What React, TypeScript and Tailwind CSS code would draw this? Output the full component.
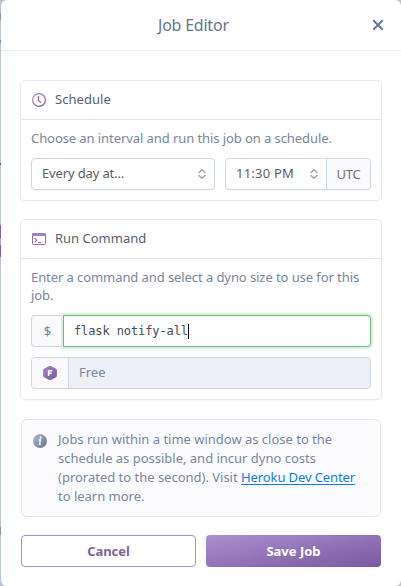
import React from 'react';

function Chevrons() {
  return (
    <svg width="8" height="10" viewBox="0 0 8 10" fill="none" stroke="#96a3b6" strokeWidth="1.4" strokeLinecap="round" strokeLinejoin="round">
      <path d="M1 3.6 4 .8l3 2.8M1 6.4l3 2.8 3-2.8" />
    </svg>
  );
}

function ClockIcon() {
  return (
    <svg width="14" height="14" viewBox="0 0 14 14" fill="none">
      <defs>
        <linearGradient id="clock" x1="0" y1="0" x2="1" y2="1">
          <stop stopColor="#ab8dcd" />
          <stop offset="1" stopColor="#79589f" />
        </linearGradient>
      </defs>
      <circle cx="7" cy="7" r="6.4" stroke="url(#clock)" strokeWidth="1.2" />
      <path d="M6.5 3v4.3L8.9 9.8" stroke="#9473b8" strokeWidth="1.3" />
    </svg>
  );
}

function TerminalIcon() {
  return (
    <svg width="14" height="12" viewBox="0 0 14 12" fill="none">
      <rect x=".5" y=".5" width="13" height="11" rx="1" stroke="#8f6fb4" />
      <path d="M0 1.2Q0 0 1.2 0h11.6Q14 0 14 1.2V3H0Z" fill="#a07fc3" />
      <path d="M2.6 5.2 4.8 7.2 2.6 9.2M6 9.5h3" stroke="#8462aa" strokeWidth="1.1" />
    </svg>
  );
}

function DynoIcon() {
  return (
    <svg width="14" height="16" viewBox="0 0 14 16">
      <defs>
        <linearGradient id="dyno" x1="0" y1="0" x2="1" y2="1">
          <stop stopColor="#a585c9" />
          <stop offset="1" stopColor="#79589f" />
        </linearGradient>
      </defs>
      <path d="M6.2.9q.8-.5 1.6 0l5.2 2.9q.9.5.9 1.4v5.6q0 .9-.9 1.4l-5.2 2.9q-.8.5-1.6 0L1 12.2q-.9-.5-.9-1.4V5.2q0-.9.9-1.4Z" fill="url(#dyno)" />
      <path d="M5.6 11V5.7h3.7M5.6 8.3h3.1" fill="none" stroke="#fff" strokeWidth="1.5" />
    </svg>
  );
}

function InfoIcon() {
  return (
    <svg width="14" height="14" viewBox="0 0 14 14">
      <defs>
        <linearGradient id="info" x1="0" y1="0" x2="1" y2="1">
          <stop stopColor="#b3bfd0" />
          <stop offset="1" stopColor="#62728f" />
        </linearGradient>
      </defs>
      <circle cx="7" cy="7" r="7" fill="url(#info)" />
      <circle cx="7.6" cy="3.6" r="1.1" fill="#fff" />
      <path d="M5.4 6h2l-1 4.4h1.5" fill="none" stroke="#fff" strokeWidth="1.3" />
    </svg>
  );
}

function CardHeader({ icon, children }: { icon: React.ReactNode; children: React.ReactNode }) {
  return (
    <div className="flex h-[39px] items-center gap-[9px] border-b border-[#e1e4ee] pb-px pl-[11px] text-[#5a6070]">
      {icon}
      {children}
    </div>
  );
}

export default function App() {
  return (
    <div className="flex h-[586px] w-[401px] overflow-hidden bg-[#bcc3d0] font-['Noto_Sans',sans-serif] text-[13px] leading-[18px] text-[#7886a0]">
      <div className="flex w-px shrink-0 flex-col">
        <div className="mt-[13px] h-[7px] bg-[#8c95a7]" />
        <div className="mt-5 h-[3px] bg-[#7890c4]" />
        <div className="mt-[120px] h-0.5 bg-[#56617a]" />
        <div className="mt-[60px] h-[13px] bg-[#80649f]" />
        <div className="h-[7px] bg-[#b9a8bd]" />
        <div className="h-3 bg-[#80649f]" />
        <div className="mt-[270px] h-2 bg-[#8c95a0]" />
      </div>
      <div className="flex w-[400px] flex-col rounded-md bg-white">
        <header className="flex h-[51px] shrink-0 items-center border-b border-[#ebecf5] pl-[157px]">
          <h1 className="w-[71px] text-base font-normal tracking-[-0.22px] whitespace-nowrap text-[#667489]">Job Editor</h1>
          <svg className="ml-[143px]" width="12" height="12" viewBox="0 0 12 12" stroke="#64789a" strokeWidth="2">
            <path d="m1.2 1.2 9.6 9.6m0-9.6-9.6 9.6" />
          </svg>
        </header>

        <section className="mt-[29px] ml-[19px] h-[121px] w-[362px] shrink-0 rounded-[5px] border border-[#e6e8ef] shadow-[0_1px_2px_#00000008]">
          <CardHeader icon={<ClockIcon />}>
            <span className="pb-0.5 tracking-[0.05px]">Schedule</span>
          </CardHeader>
          <div className="px-[10px] pt-[9px]">
            <p className="tracking-[-0.08px] whitespace-nowrap">Choose an interval and run this job on a schedule.</p>
            <div className="mt-[11px] flex text-[#5a5d62]">
              <div className="flex h-8 w-[184px] items-center justify-between rounded border border-[#cfd7e6] pr-2 pl-[10px] shadow-[0_1px_2px_#0000000a]">
                <span className="pb-0.5 tracking-[-0.14px]">Every day at...</span>
                <Chevrons />
              </div>
              <div className="ml-[10px] flex h-8 w-[146px] rounded border border-[#cfd7e6] shadow-[0_1px_2px_#0000000a]">
                <div className="flex w-[101px] items-center justify-between border-r border-[#cfd7e6] pr-2 pl-[10px]">
                  <span className="pb-0.5 tracking-[0.22px]">11:30 PM</span>
                  <Chevrons />
                </div>
                <div className="flex flex-1 items-center justify-center rounded-r bg-[#fafafd] tracking-[-0.3px] text-[#6c7078]">UTC</div>
              </div>
            </div>
          </div>
        </section>

        <section className="mt-[18px] ml-[19px] h-[181px] w-[362px] shrink-0 rounded-[5px] border border-[#e6e8ef] shadow-[0_1px_2px_#00000008]">
          <CardHeader icon={<TerminalIcon />}>
            <span className="pb-0.5">Run Command</span>
          </CardHeader>
          <div className="px-[10px] pt-[9px]">
            <p className="tracking-[-0.08px] whitespace-nowrap">
              Enter a command and select a dyno size to use for this
              <br />
              job.
            </p>
            <div className="mt-[11px] flex h-8 w-[340px]">
              <div className="flex w-8 items-center justify-center rounded-l border border-r-0 border-[#cfd7e6] bg-[#fafafd]">$</div>
              <div className="flex flex-1 items-center rounded-r border border-[#62c175] bg-white pl-[10px] font-['DejaVu_Sans_Mono',monospace] text-xs tracking-[-0.1px] text-[#4a4a4f] shadow-[0_0_0_2px_#d9f0df]">
                <span>flask notify-all</span>
                <span className="h-[15px] w-px bg-black" />
              </div>
            </div>
            <div className="mt-[10px] flex h-8 w-[340px] overflow-hidden rounded border border-[#cfd7e6] bg-[#edf0f6]">
              <div className="flex w-[37px] items-center justify-center border-r border-[#cfd7e6] bg-[#fafafd]">
                <DynoIcon />
              </div>
              <span className="pt-[5px] pl-[10px]">Free</span>
            </div>
          </div>
        </section>

        <aside className="mt-[19px] ml-5 flex h-[98px] w-[360px] shrink-0 rounded-md border border-[#e1e4f0] bg-[#fbfbfe] pt-[10px] pl-[11px] leading-[19px]">
          <div className="mt-1 mr-[11px]">
            <InfoIcon />
          </div>
          <p className="tracking-[-0.01px] whitespace-nowrap">
            <span>Jobs run within a time window as close to the</span>
            <br />
            <span>schedule as possible, and incur dyno costs</span>
            <br />
            <span>
              (prorated to the second). Visit <a className="tracking-[-0.1px] text-[#0c7cf0] underline underline-offset-2">Heroku Dev Center</a>
            </span>
            <br />
            <span>to learn more.</span>
          </p>
        </aside>

        <div className="mt-[18px] ml-5 flex gap-[10px] font-bold">
          <button className="h-8 w-[175px] rounded border border-[#a98dc4] pb-px tracking-[-0.05px] text-[#7f5fa6]">Cancel</button>
          <button className="h-8 w-[175px] rounded bg-linear-to-br from-[#ad8fcf] to-[#79589f] pb-px text-white">Save Job</button>
        </div>
      </div>
    </div>
  );
}
